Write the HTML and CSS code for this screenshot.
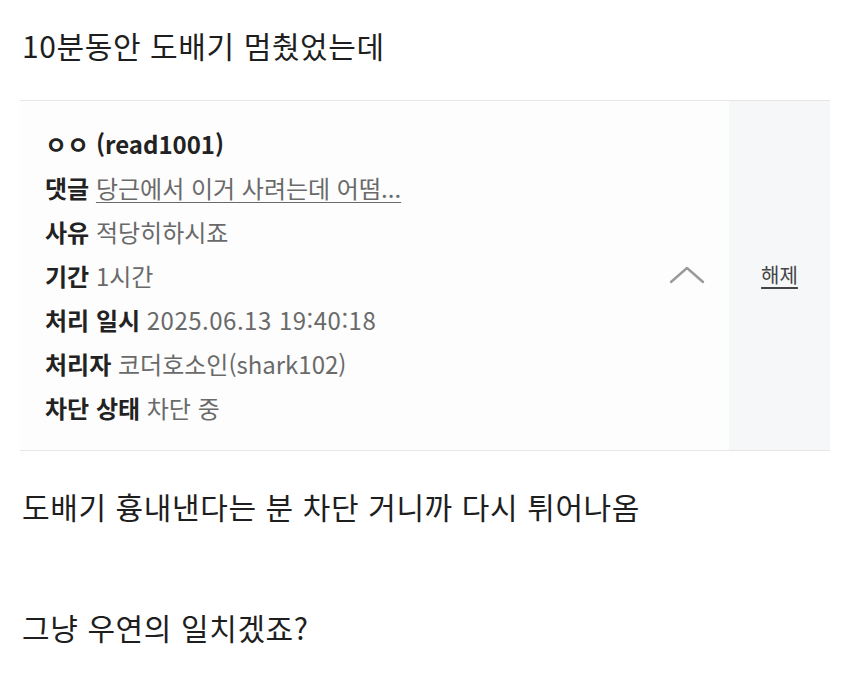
FILE: index.html
```html
<!DOCTYPE html>
<html lang="ko">
<head>
<meta charset="utf-8">
<link rel="stylesheet" href="styles.css">
</head>
<body>
<div class="post">
  <p class="line title">10분동안 도배기 멈췄었는데</p>
  <div class="card">
    <div class="card-main">
      <div class="info">
        <div class="row user">ㅇㅇ (read1001)</div>
        <div class="row"><b>댓글</b> <a class="val link">당근에서 이거 사려는데 어떰...</a></div>
        <div class="row"><b>사유</b> <span class="val">적당히하시죠</span></div>
        <div class="row"><b>기간</b> <span class="val">1시간</span></div>
        <div class="row"><b>처리 일시</b> <span class="val num">2025.06.13 19:40:18</span></div>
        <div class="row"><b>처리자</b> <span class="val">코더호소인(shark102)</span></div>
        <div class="row"><b>차단 상태</b> <span class="val">차단 중</span></div>
      </div>
      <svg class="chev" width="36" height="20" viewBox="0 0 36 20"><polyline points="2,17 18,3 34,17" fill="none" stroke="#9a9a9a" stroke-width="2.4" stroke-linecap="round" stroke-linejoin="round"/></svg>
    </div>
    <div class="card-side"><a class="unblock">해제</a></div>
  </div>
  <p class="line body1">도배기 흉내낸다는 분 차단 거니까 다시 튀어나옴</p>
  <p class="line body2">그냥 우연의 일치겠죠?</p>
</div>
</body>
</html>
```
FILE: styles.css
```css
html, body {
  margin: 0;
  padding: 0;
  background: #ffffff;
}
body {
  font-family: "Noto Sans CJK KR", "Noto Sans", sans-serif;
  color: #222222;
}
.post {
  padding: 0 20px 0 22px;
}
.line {
  margin: 0;
  font-size: 30px;
  line-height: 40px;
  color: #1e1e1e;
  letter-spacing: 0.6px;
}
.title {
  padding-top: 25px;
}
.card {
  margin: 35px 0 0 -2px;
  display: flex;
  border-top: 1px solid #e6e6e6;
  border-bottom: 1px solid #e6e6e6;
  background: #fdfdfd;
  height: 349px;
}
.card-main {
  flex: 1;
  display: flex;
  align-items: center;
  padding: 21px 24px 20px 25px;
}
.info {
  flex: 1;
  font-size: 24px;
  line-height: 44px;
  letter-spacing: 0;
}
.row b {
  font-weight: 700;
  color: #222222;
}
.user {
  font-weight: 700;
  color: #222222;
}
.val {
  color: #6a6a6a;
}
.num {
  letter-spacing: 0.5px;
}
.link {
  text-decoration: underline;
  text-underline-offset: 4px;
  text-decoration-thickness: 1px;
}
.chev {
  display: block;
  margin-top: -2px;
}
.card-side {
  width: 101px;
  background: #f6f7f9;
  display: flex;
  align-items: center;
  justify-content: center;
}
.unblock {
  font-size: 20px;
  color: #444444;
  text-decoration: underline;
  text-underline-offset: 4px;
  margin-top: -2px;
}
.body1 {
  margin-top: 35px;
}
.body2 {
  margin-top: 81px;
}
```
